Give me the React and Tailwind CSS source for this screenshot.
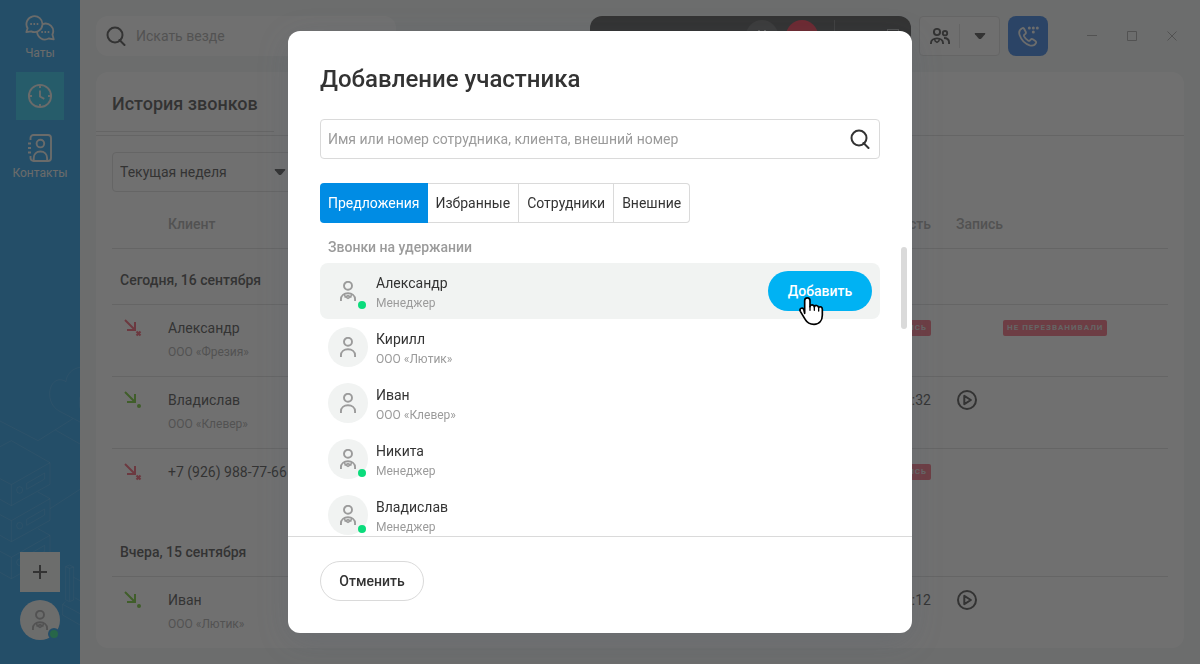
import React from "react";

const HISTORY = [
  {
    title: "Сегодня, 16 сентября",
    calls: [
      { name: "Александр", company: "ООО «Фрезия»", missed: true, status: "Не перезванивали" },
      { name: "Владислав", company: "ООО «Клевер»", duration: "02:32" },
      { name: "+7 (926) 988-77-66", missed: true },
    ],
  },
  {
    title: "Вчера, 15 сентября",
    calls: [{ name: "Иван", company: "ООО «Лютик»", duration: "05:12" }],
  },
];

const PEOPLE = [
  { name: "Александр", note: "Менеджер", staff: true, active: true },
  { name: "Кирилл", note: "ООО «Лютик»" },
  { name: "Иван", note: "ООО «Клевер»" },
  { name: "Никита", note: "Менеджер", staff: true },
  { name: "Владислав", note: "Менеджер", staff: true },
];

const TABS = ["Предложения", "Избранные", "Сотрудники", "Внешние"];

function SearchIcon() {
  return (
    <svg width="20" height="20" viewBox="0 0 20 20" fill="none" stroke="currentColor" strokeWidth="2" aria-hidden="true">
      <circle cx="9" cy="9" r="7.5" />
      <path d="M13.5 14l5 5" strokeLinecap="round" />
    </svg>
  );
}

function Caret() {
  return (
    <svg width="12" height="8" viewBox="0 0 12 8" fill="currentColor" aria-hidden="true">
      <path d="M1.6 1h8.8c.9 0 1.1.6.6 1.2L7.4 6.4c-.8.9-2 .9-2.8 0L1 2.2C.5 1.600.7 1 1.600 1z" />
    </svg>
  );
}

function PersonIcon({ staff }) {
  return (
    <svg width="16" height="20" viewBox="0 0 16 20" fill="none" stroke="currentColor" strokeWidth="1.900" aria-hidden="true">
      <circle cx="8" cy="4.800" r="4" />
      <path d="M.95 20v-1.700C.95 14.600 4 12.300 8 12.300s7.050 2.300 7.050 6V20" />
      {staff && <path d="M4.300 12.800L5.200 16 8 14.700l2.800 1.300.9-3.200M5.200 15.600L8 17.400l2.800-1.800" strokeWidth="1.500" />}
    </svg>
  );
}

function ChatIcon() {
  return (
    <svg width="30" height="26" viewBox="0 0 30 26" fill="none" stroke="currentColor" strokeWidth="1.800" strokeLinejoin="round" aria-hidden="true">
      <path d="M2.600 13.200A8 8 0 1 1 6.200 16.400L1.300 17.200z" />
      <path d="M17.600 9.200A7.600 7.600 0 0 1 27.400 19.500l1.300 4.800-5-.8A7.800 7.800 0 0 1 12.200 16" />
      <path d="M5.300 9h1.600M8.500 9h1.600M11.700 9h1.600M16.300 17h1.600M19.500 17h1.600M22.700 17h1.600" strokeWidth="1.800" />
    </svg>
  );
}

function ClockIcon() {
  return (
    <svg width="26" height="26" viewBox="0 0 26 26" fill="none" stroke="currentColor" strokeWidth="1.900" aria-hidden="true">
      <circle cx="13" cy="13" r="11.100" />
      <path d="M13 2v3M13 21v3M2 13h3M21 13h3M13 7.500v6l4.300 2.300" />
    </svg>
  );
}

function ContactsIcon() {
  return (
    <svg width="26" height="28" viewBox="0 0 26 28" fill="none" stroke="currentColor" strokeWidth="1.900" aria-hidden="true">
      <path d="M3.500 6V4a3 3 0 0 1 3-3H21a3 3 0 0 1 3 3v20a3 3 0 0 1-3 3H6.500a3 3 0 0 1-3-3v-2" />
      <path d="M1 9.500h3M1 14h3M1 18.500h3" />
      <circle cx="13.400" cy="9.600" r="3.800" />
      <path d="M6.700 26.500v-2.300c0-4 2.700-6.700 6.700-6.700s6.700 2.700 6.700 6.700v2.300" />
    </svg>
  );
}

function TeamIcon() {
  return (
    <svg width="20" height="16" viewBox="0 0 20 16" fill="none" stroke="currentColor" strokeWidth="1.900" aria-hidden="true">
      <circle cx="7" cy="4" r="3.100" />
      <circle cx="15" cy="5.200" r="2.200" />
      <path d="M.95 16v-.8c0-2.900 2.500-4.800 6.050-4.800s6.050 1.900 6.050 4.800v.8M14 10c3 0 5.050 1.800 5.050 4.600V16" />
      <path d="M4.500 11l.7 2L7 14.300 8.800 13l.7-2" strokeWidth="1.500" />
    </svg>
  );
}

function DialIcon() {
  return (
    <svg width="21" height="21" viewBox="0 0 21 21" fill="none" stroke="currentColor" strokeWidth="1.800" strokeLinejoin="round" aria-hidden="true">
      <path d="M4.200 2.200C1.600 3.500.6 6.200 1.700 9.300c1.700 4.800 5.500 8.600 10 10 2.900.8 5.300-.2 6.200-2.100.5-1 .3-1.600-.5-2.200l-2.600-1.700c-.8-.5-1.500-.4-2.100.3l-.8.9c-.5.500-1 .5-1.600.2-1.900-1.100-3.300-2.700-4.200-4.400-.3-.6-.2-1.100.3-1.600l1-.9c.6-.6.7-1.300.3-2.100L6.100 2.800c-.5-.8-1.100-1-1.900-.6z" />
      <g fill="currentColor" stroke="none">
        <circle cx="11.300" cy="2" r="1.500" />
        <circle cx="15.300" cy="2" r="1.500" />
        <circle cx="19.300" cy="2" r="1.500" />
        <circle cx="15.300" cy="6" r="1.500" />
      </g>
    </svg>
  );
}

function CallIcon({ missed }) {
  return (
    <svg width="18" height="18" viewBox="0 0 18 18" fill="none" stroke={missed ? "#f2495f" : "#5fc116"} strokeWidth="2" aria-hidden="true">
      <path d="M1 1l9.500 9.500M11 3v8H3" />
      {missed ? (
        <path d="M12.500 12.500l4 4M16.500 12.500l-4 4" strokeWidth="2.200" />
      ) : (
        <circle cx="15" cy="15" r="2" fill="#5fc116" stroke="none" />
      )}
    </svg>
  );
}

function PlayIcon() {
  return (
    <svg width="20" height="20" viewBox="0 0 20 20" fill="none" stroke="currentColor" strokeWidth="2" strokeLinejoin="round" aria-hidden="true">
      <circle cx="10" cy="10" r="9" />
      <path d="M7.300 5.800v8.400l6.600-4.200z" />
    </svg>
  );
}

function SidebarArt() {
  return (
    <svg
      className="pointer-events-none absolute bottom-0 left-0"
      width="80"
      height="324"
      viewBox="0 0 240 972"
      fill="none"
      stroke="#ffffff"
      strokeOpacity="0.12"
      strokeWidth="3"
      aria-hidden="true"
    >
      <path d="M240 82c-24 4-40 20-42 43-24-16-49 3-49 37 0 26 14 45 34 54l57 30M240 170c-3 10-3 20 0 34" />
      <path d="M0 243l114 59 105-66M166 270l74 42M0 320l34-18 116 66v65l-116 64-34-19M0 416l34 18 116-66M34 434v63" />
      <path d="M114 456l36 20v65L34 605 0 586M0 524l34 18 116-66M34 542v63" />
      <path d="M114 566l36 20v65L34 716 0 697M0 634l34 18 116-66M34 652v64" />
      <path d="M80 430l54-31v18l-54 31zM80 538l54-31v18l-54 31zM80 647l54-31v18l-54 31zM150 506l90-58" />
      <ellipse cx="59" cy="450" rx="9" ry="10" />
      <ellipse cx="59" cy="557" rx="9" ry="10" />
      <ellipse cx="59" cy="667" rx="9" ry="10" />
      <path d="M197 680l11-5 13 6v99l-13 5-11-6zM197 680l12 5 12-4M209 685v98M221 712l19 10M197 785l-9 8v32l52 30M188 793l52 28M224 773l16 9" />
    </svg>
  );
}

function NavItem({ label, active, children }) {
  return (
    <a
      href="#"
      aria-label={label}
      className={
        active
          ? "flex size-12 items-center justify-center bg-[#08bbe9]"
          : "flex h-12 flex-col items-center text-xs leading-[18px]"
      }
    >
      <span className="flex h-8 shrink-0 items-center justify-center">{children}</span>
      {!active && <span>{label}</span>}
    </a>
  );
}

function Sidebar() {
  return (
    <aside className="relative flex w-20 shrink-0 flex-col justify-between bg-[#008ce4] pt-3 pb-6 text-[#e9eeec]">
      <SidebarArt />
      <nav className="flex flex-col items-center gap-3">
        <NavItem label="Чаты"><ChatIcon /></NavItem>
        <NavItem label="История" active><ClockIcon /></NavItem>
        <NavItem label="Контакты"><ContactsIcon /></NavItem>
      </nav>
      <div className="relative flex flex-col items-center gap-2">
        <button aria-label="Создать" className="flex size-10 items-center justify-center bg-[#f1f3f2] text-[#333]">
          <svg width="14" height="14" viewBox="0 0 14 14" stroke="currentColor" strokeWidth="2" aria-hidden="true">
            <path d="M7 0v14M0 7h14" />
          </svg>
        </button>
        <button aria-label="Профиль" className="relative flex size-10 items-center justify-center rounded-full bg-[#f1f3f2] text-[#9b9b9b]">
          <PersonIcon staff />
          <span className="absolute right-[2px] bottom-[2px] size-2 rounded-full bg-[#0bdc7c] ring-2 ring-[#008ce4]" />
        </button>
      </div>
    </aside>
  );
}

function TopBar() {
  return (
    <header className="flex h-10 items-center gap-2 pr-2 pl-4">
      <label className="flex h-10 w-[300px] items-center gap-2 rounded-xl bg-white pl-[10px] text-[#333]">
        <SearchIcon />
        <input aria-label="Искать везде" placeholder="Искать везде" className="min-w-0 flex-1 bg-transparent pl-[2px] text-sm outline-none placeholder:text-[#9b9b9b]" />
      </label>
      <div className="ml-auto flex h-10 w-[321px] items-center justify-end gap-2 rounded-xl bg-[#333] pr-3">
        <button aria-label="Пауза" className="flex size-8 items-center justify-center rounded-full bg-[#505050] text-[#dadada]">
          <svg width="8" height="12" viewBox="0 0 8 12" stroke="currentColor" strokeWidth="2" aria-hidden="true"><path d="M1 0v12M7 0v12" /></svg>
        </button>
        <button aria-label="Завершить" className="mr-2 size-8 rounded-full bg-[#f5122d]" />
        <span className="mr-11 h-8 w-px bg-[#606060]" />
        <span className="h-[14px] w-3 border border-[#9b9b9b]" />
      </div>
      <div className="flex h-10 w-[81px] items-center rounded border border-[#dadada] bg-[#fbfbfb] text-[#333]">
        <button aria-label="Участники" className="flex flex-1 justify-center"><TeamIcon /></button>
        <span className="h-6 w-px bg-[#dadada]" />
        <button aria-label="Ещё" className="flex flex-1 justify-center"><Caret /></button>
      </div>
      <button aria-label="Позвонить" className="flex size-10 items-center justify-center rounded-lg bg-[#1a6bdc] text-[#f1f3f2]">
        <DialIcon />
      </button>
      <div className="ml-4 flex text-[#9b9b9b]">
        <button aria-label="Свернуть" className="flex size-10 items-center justify-center">
          <svg width="10" height="10" viewBox="0 0 10 10" stroke="currentColor" aria-hidden="true"><path d="M0 4.500h10" /></svg>
        </button>
        <button aria-label="Развернуть" className="flex size-10 items-center justify-center">
          <svg width="10" height="10" viewBox="0 0 10 10" fill="none" stroke="currentColor" aria-hidden="true"><path d="M.5.5h9v9h-9z" /></svg>
        </button>
        <button aria-label="Закрыть" className="flex size-10 items-center justify-center">
          <svg width="10" height="10" viewBox="0 0 10 10" stroke="currentColor" aria-hidden="true"><path d="M.5.5l9 9M9.500.5l-9 9" /></svg>
        </button>
      </div>
    </header>
  );
}

function Badge({ children }) {
  return (
    <span className="inline-block rounded-xs bg-[#f4566b] px-1 text-[8px] leading-4 font-bold tracking-[1px] whitespace-nowrap text-[#dadada] uppercase">
      {children}
    </span>
  );
}

function CallRow({ call }) {
  const cell = "h-[72px] border-t border-[#dadada] p-0 pt-[11px] align-top leading-6";
  return (
    <tr>
      <td className={cell}>
        <div className="flex h-6 items-center pl-3"><CallIcon missed={call.missed} /></div>
      </td>
      <td className={cell}>
        <div>{call.name}</div>
        <div className="text-xs leading-6 text-[#9b9b9b]">{call.company}</div>
      </td>
      <td className={cell}>
        <div className="flex h-6 items-center justify-end">{call.duration || <Badge>Не дозвонились</Badge>}</div>
      </td>
      <td className={cell}>
        {call.duration && (
          <button aria-label="Прослушать" className="ml-[26px] flex h-6 items-center"><PlayIcon /></button>
        )}
      </td>
      <td className={cell}>
        <div className="flex h-6 items-center">{call.status && <Badge>{call.status}</Badge>}</div>
      </td>
    </tr>
  );
}

function History() {
  return (
    <section className="mx-4 mt-4 rounded-xl bg-white text-sm text-[#333]">
      <div className="h-16 border-b border-[#dadada]">
        <h2 className="flex h-15 w-[178px] items-center border-b border-[#dadada] pt-1 pl-4 text-lg font-medium whitespace-nowrap">
          История звонков
        </h2>
      </div>
      <div className="px-4 pt-4">
        <div className="relative flex h-10 w-[184px] items-center">
          <select aria-label="Период" className="h-10 w-full appearance-none rounded border border-[#dadada] bg-transparent px-[7px]">
            <option>Текущая неделя</option>
          </select>
          <span className="pointer-events-none absolute right-[10px]"><Caret /></span>
        </div>
        <table className="mt-2 w-full table-fixed border-separate border-spacing-0">
          <colgroup>
            <col className="w-14" />
            <col />
            <col className="w-40" />
            <col className="w-[72px]" />
            <col className="w-[165px]" />
          </colgroup>
          <thead>
            <tr className="text-[#9b9b9b]">
              <th className="h-12 p-0" />
              <th className="p-0 text-left font-medium">Клиент</th>
              <th className="p-0 text-right font-medium">Длительность</th>
              <th className="p-0 pl-[25px] text-left font-medium">Запись</th>
              <th className="p-0" />
            </tr>
          </thead>
          {HISTORY.map((group, i) => (
            <tbody key={group.title}>
              <tr>
                <th
                  colSpan={5}
                  className={
                    i === 0
                      ? "h-14 border-t border-[#dadada] p-0 pt-[6px] pl-2 text-left font-medium"
                      : "h-14 p-0 pt-2 pl-2 text-left font-medium"
                  }
                >
                  {group.title}
                </th>
              </tr>
              {group.calls.map((call) => <CallRow key={call.name} call={call} />)}
            </tbody>
          ))}
        </table>
      </div>
    </section>
  );
}

function HandCursor() {
  return (
    <svg className="pointer-events-none absolute top-6 left-[29px]" width="28" height="31" viewBox="171 555 84 93" fill="#fff" stroke="#000" strokeWidth="5" strokeLinejoin="round" strokeLinecap="round" aria-hidden="true">
      <path d="M194 610v-38c0-11 16-11 16 0v18c1-8 12-7 13 1 2-7 11-6 13 2 3-5 11-3 11 5v17c0 17-9 28-25 28-13 0-21-5-26-14l-15-25c-4-8 5-13 10-7z" />
      <path d="M210 590v11M223 591v10M236 594v9" strokeWidth="4" fill="none" />
    </svg>
  );
}

function PersonRow({ person }) {
  return (
    <li className={person.active ? "flex h-14 items-center gap-2 rounded-lg bg-[#f1f3f2] px-2" : "flex h-14 items-center gap-2 rounded-lg px-2"}>
      <span className="relative flex size-10 shrink-0 items-center justify-center rounded-full bg-[#f1f3f2] text-[#9b9b9b]">
        <PersonIcon staff={person.staff} />
        {person.staff && <span className="absolute right-[2px] bottom-[2px] size-2 rounded-full bg-[#0bdc7c]" />}
      </span>
      <div className="min-w-0 flex-1 pt-1">
        <div className="text-sm leading-5">{person.name}</div>
        <div className="text-xs leading-5 text-[#9b9b9b]">{person.note}</div>
      </div>
      {person.active && (
        <div className="relative">
          <button className="h-10 w-[104px] rounded-full bg-[#00b2f3] text-sm font-medium text-white">Добавить</button>
          <HandCursor />
        </div>
      )}
    </li>
  );
}

function AddParticipant() {
  return (
    <div className="fixed inset-0 flex items-center justify-center bg-[#333]/70">
      <div
        role="dialog"
        aria-modal="true"
        aria-labelledby="dialog-title"
        className="w-full max-w-[624px] rounded-xl bg-white pt-8 text-[#333] shadow-[0_8px_32px_rgba(80,95,115,0.2)]"
      >
        <div className="px-8">
          <h1 id="dialog-title" className="text-2xl leading-8 font-medium">Добавление участника</h1>
          <label className="mt-6 flex h-10 items-center rounded border border-[#dadada] pr-[9px] pl-[7px]">
            <input
              aria-label="Поиск участника"
              placeholder="Имя или номер сотрудника, клиента, внешний номер"
              className="min-w-0 flex-1 text-sm outline-none placeholder:text-[#9b9b9b]"
            />
            <SearchIcon />
          </label>
          <div role="tablist" className="mt-6 flex h-10 text-sm">
            {TABS.map((tab, i) => (
              <button
                key={tab}
                role="tab"
                aria-selected={i === 0}
                className={
                  i === 0
                    ? "rounded-l bg-[#008ce4] px-2 text-white"
                    : "border-y border-r border-[#dadada] px-2 last:rounded-r"
                }
              >
                {tab}
              </button>
            ))}
          </div>
        </div>
        <div className="relative h-[313px] overflow-hidden px-8 pt-2">
          <h3 className="pl-2 text-sm leading-8 font-medium text-[#9b9b9b]">Звонки на удержании</h3>
          <ul>
            {PEOPLE.map((person) => <PersonRow key={person.name} person={person} />)}
          </ul>
          <span className="absolute top-6 right-[5px] h-[82px] w-[6px] rounded-full bg-[#dadada]" />
        </div>
        <div className="border-t border-[#dadada] px-8 pt-6 pb-8">
          <button className="block h-10 w-[104px] rounded-full border border-[#dadada] text-sm font-medium">Отменить</button>
        </div>
      </div>
    </div>
  );
}

export default function App() {
  return (
    <div className="flex min-h-screen bg-[#f0f4f3] font-[Roboto,sans-serif]">
      <Sidebar />
      <main className="min-w-0 flex-1 py-4">
        <TopBar />
        <History />
      </main>
      <AddParticipant />
    </div>
  );
}
